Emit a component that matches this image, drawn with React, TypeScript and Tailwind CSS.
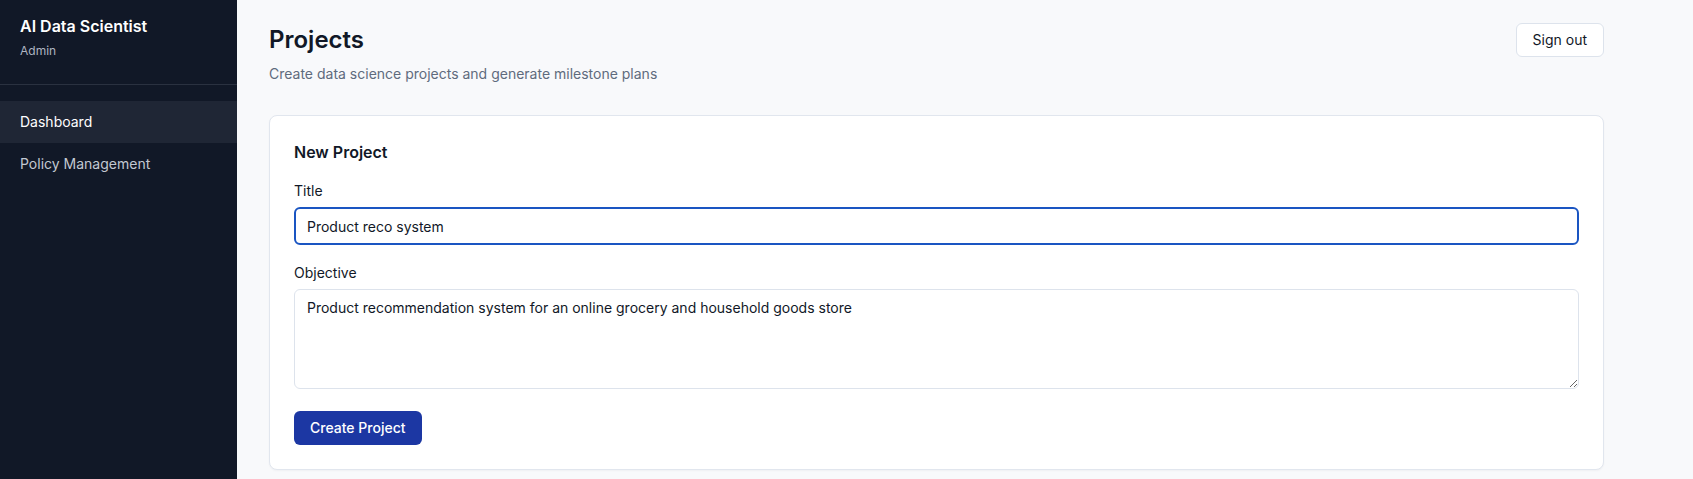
import { useState } from "react"

const navItems = ["Dashboard", "Policy Management"]

export default function App() {
  const [title, setTitle] = useState("Product reco system")
  const [objective, setObjective] = useState(
    "Product recommendation system for an online grocery and household goods store"
  )
  const [active] = useState("Dashboard")

  return (
    <div
      className="flex h-[479px] overflow-hidden bg-[#f8f9fb] text-[#111827]"
      style={{ fontFamily: "Inter, 'Noto Sans', sans-serif" }}
    >
      <aside className="flex w-[237px] shrink-0 flex-col bg-[#111827]">
        <div className="border-b border-[#2a3140] px-5 pt-[14px] pb-[25px]">
          <div className="text-base leading-6 font-semibold text-white">AI Data Scientist</div>
          <div className="mt-[5px] text-xs leading-4 text-[#aeb5c2]">Admin</div>
        </div>
        <nav className="flex flex-col pt-4">
          {navItems.map((item) => (
            <a
              key={item}
              href="#"
              className={
                item === active
                  ? "bg-[#1f2635] px-5 py-[11px] text-sm leading-5 text-white"
                  : "px-5 py-[11px] text-sm leading-5 text-[#c2c8d2]"
              }
            >
              {item}
            </a>
          ))}
        </nav>
      </aside>

      <main className="min-w-0 flex-1 pt-6 pl-8">
        <div className="w-[1335px]">
          <header className="flex items-start justify-between">
            <div>
              <h1 className="text-2xl leading-8 font-semibold text-[#111827]">Projects</h1>
              <p className="mt-2 text-sm leading-5 text-[#5f6b7d]">
                Create data science projects and generate milestone plans
              </p>
            </div>
            <button className="-mt-px h-[34px] rounded-md border border-[#dde3ec] bg-white px-4 text-sm text-[#111827]">
              Sign out
            </button>
          </header>

          <section className="mt-[31px] rounded-lg border border-[#e1e6ee] bg-white p-6 shadow-[0_1px_2px_rgba(15,23,42,0.04)]">
            <h2 className="text-base leading-6 font-semibold text-[#111827]">New Project</h2>

            <label className="mt-[17px] block text-sm leading-5 text-[#111827]">Title</label>
            <input
              value={title}
              onChange={(e) => setTitle(e.target.value)}
              className="mt-[6px] block h-[38px] w-full rounded-md border-2 border-[#1a55c2] px-[11px] text-sm text-[#111827] outline-none"
            />

            <label className="mt-[18px] block text-sm leading-5 text-[#111827]">Objective</label>
            <textarea
              value={objective}
              onChange={(e) => setObjective(e.target.value)}
              className="mt-[6px] block h-[100px] w-full rounded-md border border-[#dde3ec] px-3 py-2 text-sm leading-5 text-[#111827] outline-none"
            />

            <button className="mt-[22px] h-[34px] rounded-md bg-[#1c37a3] px-4 text-sm font-medium text-white">
              Create Project
            </button>
          </section>
        </div>
      </main>
    </div>
  )
}
